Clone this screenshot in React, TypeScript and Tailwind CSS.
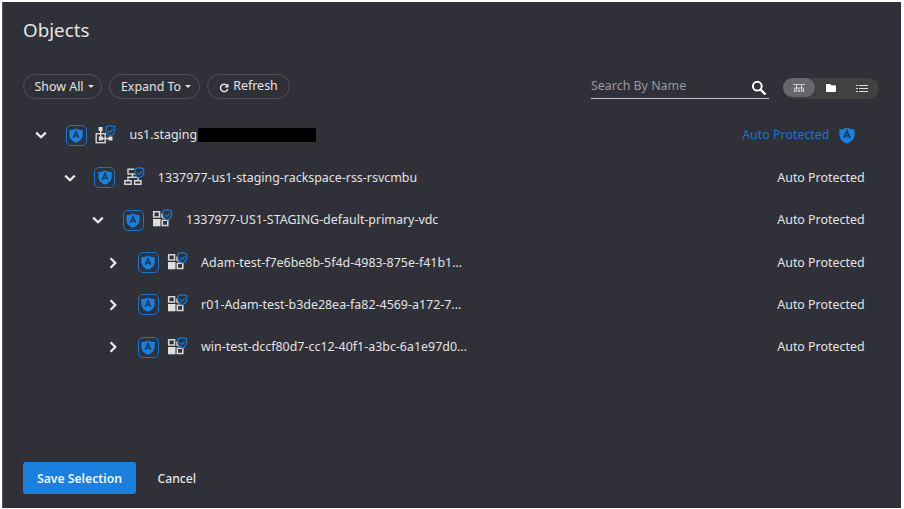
import React from "react";

type NodeKind = "org" | "network" | "vdc";

interface TreeNode {
  name: string;
  kind: NodeKind;
  open: boolean;
  indent: string;
  redacted?: boolean;
}

const nodes: TreeNode[] = [
  { name: "us1.staging", kind: "org", open: true, indent: "pl-[12.400px]", redacted: true },
  { name: "1337977-us1-staging-rackspace-rss-rsvcmbu", kind: "network", open: true, indent: "pl-[40.700px]" },
  { name: "1337977-US1-STAGING-default-primary-vdc", kind: "vdc", open: true, indent: "pl-[69px]" },
  { name: "Adam-test-f7e6be8b-5f4d-4983-875e-f41b1...", kind: "vdc", open: false, indent: "pl-[84px]" },
  { name: "r01-Adam-test-b3de28ea-fa82-4569-a172-7...", kind: "vdc", open: false, indent: "pl-[84px]" },
  { name: "win-test-dccf80d7-cc12-40f1-a3bc-6a1e97d0...", kind: "vdc", open: false, indent: "pl-[84px]" },
];

function Shield({ className }: { className: string }) {
  return (
    <svg viewBox="0 0 16 17" className={className}>
      <path d="M8 .4C10.400 1.700 13 2.200 15.600 2.200V7.500C15.600 12 12.300 15 8 16.600C3.700 15 .4 12 .4 7.500V2.200C3 2.200 5.600 1.700 8 .4Z" fill="#1a7fdd" />
      <path d="M4.900 11.200 8 3.800l3.100 7.400M6 9h4" fill="none" stroke="#1d3a5e" strokeWidth="1.700" />
    </svg>
  );
}

function Chevron({ open }: { open: boolean }) {
  return (
    <svg viewBox="0 0 12 12" className="size-[12px] shrink-0" fill="none" stroke="#ececee" strokeWidth="2.200">
      {open ? <path d="m1.200 3.600 4.800 4.700 4.800-4.700" /> : <path d="m3.600 1.200 4.700 4.800-4.700 4.800" />}
    </svg>
  );
}

function KindIcon({ kind }: { kind: NodeKind }) {
  return (
    <svg viewBox="0 0 21 20" className="h-[20px] w-[21px] shrink-0" fill="none" stroke="#d6d6d8" strokeWidth="1.400">
      {kind === "org" && (
        <>
          <rect x="1.200" y="8.700" width="9" height="9" />
          <path d="M5.700 6v7.500H14" />
          <path d="M3.600 2h4v4h-4zM3.800 11.600h4v3.800h-4zM13.500 11.600h4v4h-4z" fill="#dededf" stroke="none" />
        </>
      )}
      {kind === "network" && (
        <>
          <path d="M12 7H4V2.200h6M8.500 7v3.200M4 13.500v-3.300h10v3.300" />
          <path d="M.8 13.700h6.400v3.500H.8zM10.600 13.700H17v3.500h-6.400z" />
        </>
      )}
      {kind === "vdc" && (
        <>
          <path d="M1.700 2.700h5.800v5.300H1.700zM10.300 11.200h5.500v5.300h-5.500zM10 4.500v3.500l3.500 1.500" strokeWidth="1.600" />
          <path d="M1 10h7.500v7.300H1z" fill="#dededf" stroke="none" />
        </>
      )}
      <path d="M15.300.7 19.600 1.900V5.600C19.600 8.200 17.900 9.900 15.300 10.900C12.700 9.900 11 8.200 11 5.600V1.900Z" fill="#303038" stroke="#1b72c2" strokeWidth="1.400" />
      <path d="m13.200 5.800 1.700 1.600 2.900-3.200" stroke="#1b72c2" strokeWidth="1.400" />
    </svg>
  );
}

function Row({ node }: { node: TreeNode }) {
  return (
    <div className={`flex h-[42.400px] items-center border-b border-[#2c2c33] pt-[3px] ${node.indent}`}>
      <Chevron open={node.open} />
      <span className="ml-[18.600px] flex size-[21px] shrink-0 items-center justify-center rounded-[5px] border border-[#1b74c8] bg-[#2c323f]">
        <Shield className="h-[15px] w-[14px]" />
      </span>
      <span className="ml-[8.500px] flex pb-[1.500px]">
        <KindIcon kind={node.kind} />
      </span>
      <span className="ml-[13px] whitespace-nowrap">{node.name}</span>
      {node.redacted && <span className="ml-px h-[14px] w-[118px] bg-black" />}
      {node.redacted ? (
        <span className="ml-auto mr-[24.500px] flex items-center gap-[9px] text-[#2270cc]">
          Auto Protected
          <Shield className="h-[17px] w-[16px]" />
        </span>
      ) : (
        <span className="ml-auto mr-[14.400px]">Auto Protected</span>
      )}
    </div>
  );
}

function Caret() {
  return (
    <svg viewBox="0 0 6 3" className="ml-[4px] h-[3px] w-[6px]">
      <path d="M0 0h6L3 3z" fill="#e4e4e5" />
    </svg>
  );
}

export default function App() {
  return (
    <div className="h-[509px] w-[904px] overflow-hidden bg-white pl-[2px] pt-[2px] font-['Noto_Sans','Open_Sans',sans-serif] text-[12.430px] leading-[18px] text-[#e3e3e4]">
      <main className="flex h-[506px] w-[899px] flex-col border-l border-[#55555a] bg-[#303038] pl-[20px] pr-[22px]">
        <h1 className="mt-[15px] text-[18.800px] leading-[26px]">Objects</h1>

        <div className="mt-[31px] flex h-[25px] items-center">
          <button className="flex h-[25px] w-[79px] items-center justify-center rounded-full border border-[#505055] pl-[3px]">
            Show All
            <Caret />
          </button>
          <button className="ml-[7px] flex h-[25px] w-[91px] items-center justify-center rounded-full border border-[#505055] pl-[3px]">
            Expand To
            <Caret />
          </button>
          <button className="ml-[7px] flex h-[25px] w-[83px] items-center justify-center rounded-full border border-[#505055]">
            <svg viewBox="0 0 10 10" className="mr-[4px] mt-[3px] size-[10px]" fill="none" stroke="#ececee" strokeWidth="1.400">
              <path d="M8 2.500A3.700 3.700 0 1 0 8.700 6" />
              <path d="M9.500.5v4h-4z" fill="#ececee" stroke="none" />
            </svg>
            <span className="-mt-px">Refresh</span>
          </button>
          <div className="ml-auto flex h-[24px] w-[178px] items-center justify-between border-b border-[#c4c4c6] pb-px text-[#98989c]">
            <span>Search By Name</span>
            <svg viewBox="0 0 16 16" className="mr-[2px] mt-[4px] size-[16px]" fill="none" stroke="#ffffff">
              <circle cx="6.300" cy="6.200" r="4.400" strokeWidth="2" />
              <path d="m9.500 9.500 5 5" strokeWidth="2.300" />
            </svg>
          </div>
          <div className="ml-[14px] mt-[3px] flex h-[21px] w-[96px] items-center rounded-full bg-[#414144]">
            <span className="flex h-[19px] w-[32px] items-center justify-center self-start rounded-full bg-[#66666b] shadow">
              <svg viewBox="0 0 12 10" className="mt-px h-[10px] w-[12px]" fill="none" stroke="#dcdcde">
                <path d="M0 1.500h12M3.500 1.500v6M8.500 1.500v6M1.500 7V5h9v2M6 5v2" strokeOpacity=".85" />
                <path d="M1 8h2.500M4.700 8h2.600M8.500 8H11" strokeWidth="1.600" />
              </svg>
            </span>
            <svg viewBox="0 0 10 8" className="ml-[11px] h-[8px] w-[10px]">
              <path d="M.5 0h3.700l1 1.200H9q1 0 1 1V7q0 1-1 1H1Q0 8 0 7V.8Q0 0 .5 0Z" fill="#fff" />
            </svg>
            <svg viewBox="0 0 12 9" className="ml-[20px] h-[9px] w-[12px]" stroke="#dedee0">
              <path d="M0 1.500h2M3 1.500h9M0 4.500h2M3 4.500h9M0 7.500h2M3 7.500h9" />
            </svg>
          </div>
        </div>

        <div className="mt-[14.200px] flex flex-col">
          {nodes.map((node) => (
            <Row key={node.name} node={node} />
          ))}
        </div>

        <div className="mt-auto mb-[14px] flex items-center text-[12.200px]">
          <button className="h-[32px] w-[113px] rounded-[3px] bg-[#1a7fdd] pt-px font-semibold text-[#edf4fc]">Save Selection</button>
          <button className="ml-[21.500px] pt-px font-medium">Cancel</button>
        </div>
      </main>
    </div>
  );
}
